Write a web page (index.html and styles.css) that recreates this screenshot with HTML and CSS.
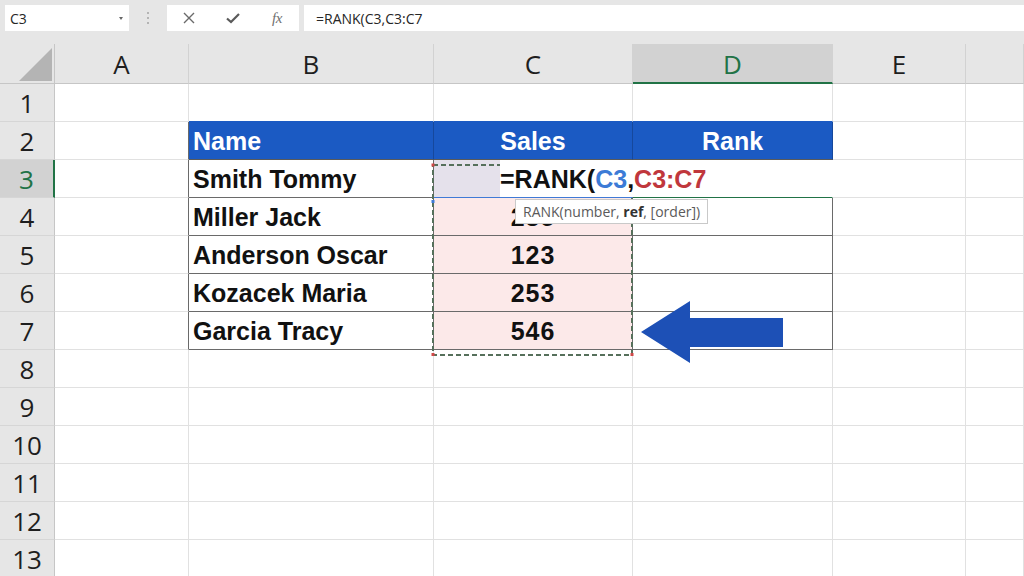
FILE: index.html
```html
<!DOCTYPE html>
<html>
<head>
<meta charset="utf-8">
<link rel="stylesheet" href="styles.css">
</head>
<body>
<div class="app">
  <div class="toolbar">
    <div class="namebox"><span>C3</span><span class="caret"></span></div>
    <div class="sep"><i></i><i></i><i></i></div>
    <div class="btns">
      <span class="btn"><svg width="14" height="14" viewBox="0 0 14 14"><path d="M2 2L12 12M12 2L2 12" stroke="#6a6a6a" stroke-width="1.4" fill="none"/></svg></span>
      <span class="btn"><svg width="16" height="14" viewBox="0 0 16 14"><path d="M2 7.5L6 11L14 3" stroke="#5a5a5a" stroke-width="2.2" fill="none"/></svg></span>
      <span class="btn fx">fx</span>
    </div>
    <div class="formula">=RANK(C3,C3:C7</div>
  </div>

  <div class="sheet">
    <div class="corner"><span class="tri"></span></div>
    <div class="ch">A</div><div class="ch">B</div><div class="ch">C</div><div class="ch sel">D</div><div class="ch">E</div><div class="ch"></div>

    <div class="rh">1</div><div class="c"></div><div class="c top"></div><div class="c top"></div><div class="c top"></div><div class="c"></div><div class="c"></div>

    <div class="rh">2</div><div class="c tl"></div><div class="c th left">Name</div><div class="c th">Sales</div><div class="c th">Rank</div><div class="c"></div><div class="c"></div>

    <div class="rh sel">3</div><div class="c tl"></div><div class="c td name">Smith Tommy</div><div class="c td ref3"></div><div class="c td active"></div><div class="c"></div><div class="c"></div>

    <div class="rh">4</div><div class="c tl"></div><div class="c td name">Miller Jack</div><div class="c td rng num">235</div><div class="c td"></div><div class="c"></div><div class="c"></div>

    <div class="rh">5</div><div class="c tl"></div><div class="c td name">Anderson Oscar</div><div class="c td rng num">123</div><div class="c td"></div><div class="c"></div><div class="c"></div>

    <div class="rh">6</div><div class="c tl"></div><div class="c td name">Kozacek Maria</div><div class="c td rng num">253</div><div class="c td"></div><div class="c"></div><div class="c"></div>

    <div class="rh">7</div><div class="c tl"></div><div class="c td name">Garcia Tracy</div><div class="c td rng num">546</div><div class="c td"></div><div class="c"></div><div class="c"></div>

    <div class="rh">8</div><div class="c"></div><div class="c"></div><div class="c"></div><div class="c"></div><div class="c"></div><div class="c"></div>
    <div class="rh">9</div><div class="c"></div><div class="c"></div><div class="c"></div><div class="c"></div><div class="c"></div><div class="c"></div>
    <div class="rh">10</div><div class="c"></div><div class="c"></div><div class="c"></div><div class="c"></div><div class="c"></div><div class="c"></div>
    <div class="rh">11</div><div class="c"></div><div class="c"></div><div class="c"></div><div class="c"></div><div class="c"></div><div class="c"></div>
    <div class="rh">12</div><div class="c"></div><div class="c"></div><div class="c"></div><div class="c"></div><div class="c"></div><div class="c"></div>
    <div class="rh">13</div><div class="c"></div><div class="c"></div><div class="c"></div><div class="c"></div><div class="c"></div><div class="c"></div>

    <svg class="ants" width="204" height="195" viewBox="0 0 204 195">
      <rect x="2" y="2" width="199" height="190" fill="none" stroke="#56705b" stroke-width="2" stroke-dasharray="5 3"/>
      <rect x="0.5" y="0.5" width="3" height="3" fill="#d04848"/>
      <rect x="199.5" y="0.5" width="3" height="3" fill="#d04848"/>
      <rect x="0.5" y="190" width="3" height="3" fill="#d04848"/>
      <rect x="199.5" y="190" width="3" height="3" fill="#d04848"/>
      <rect x="0.5" y="37" width="3" height="3" fill="#3f7ad6"/>
    </svg>

    <div class="editor"><span>=RANK(</span><span class="rb">C3</span><span>,</span><span class="rr">C3:C7</span></div>

    <div class="tip"><span>RANK(number, <b>ref</b>, [order])</span></div>

    <svg class="arrow" width="144" height="62" viewBox="0 0 144 62">
      <polygon points="0,31 49,0 49,17 142,17 142,46 49,46 49,62" fill="#1d50b6"/>
    </svg>
  </div>
</div>
</body>
</html>
```

FILE: styles.css
```css
html, body {
  margin: 0;
  padding: 0;
}
body {
  width: 1024px;
  height: 576px;
  overflow: hidden;
  background: #ffffff;
  font-family: "Open Sans", "Noto Sans", sans-serif;
}
.app {
  width: 1024px;
  height: 576px;
  display: flex;
  flex-direction: column;
}

/* formula bar */
.toolbar {
  height: 44px;
  flex: none;
  box-sizing: border-box;
  padding: 5px 0 0 5px;
  background: #e6e6e6;
  display: flex;
  align-items: flex-start;
}
.namebox {
  width: 124px;
  height: 26px;
  box-sizing: border-box;
  background: #fff;
  padding: 0 6px 0 5px;
  display: flex;
  align-items: center;
  justify-content: space-between;
  font-size: 14px;
  color: #262626;
}
.caret {
  width: 0;
  height: 0;
  border-left: 2.5px solid transparent;
  border-right: 2.5px solid transparent;
  border-top: 3px solid #666;
}
.sep {
  width: 38px;
  height: 26px;
  display: flex;
  flex-direction: column;
  align-items: center;
  justify-content: center;
  gap: 3px;
}
.sep i {
  width: 2px;
  height: 2px;
  background: #b4b4b4;
  display: block;
}
.btns {
  width: 132px;
  height: 26px;
  background: #fff;
  display: grid;
  grid-template-columns: 44px 44px 44px;
}
.btn {
  display: flex;
  align-items: center;
  justify-content: center;
}
.fx {
  font-family: "Liberation Serif", serif;
  font-style: italic;
  font-size: 15px;
  color: #707070;
  letter-spacing: -0.5px;
}
.formula {
  flex: 1;
  margin-left: 5px;
  height: 26px;
  background: #fff;
  box-sizing: border-box;
  padding-left: 12px;
  display: flex;
  align-items: center;
  font-size: 14px;
  color: #262626;
}

/* grid */
.sheet {
  position: relative;
  flex: 1;
  display: grid;
  grid-template-columns: 55px 134px 245px 199px 200px 133px 1fr;
  grid-template-rows: 40px;
  grid-auto-rows: 38px;
  overflow: hidden;
}
.corner {
  background: #e6e6e6;
  border-right: 1px solid #c6c6c6;
  border-bottom: 1px solid #c6c6c6;
  position: relative;
}
.tri {
  position: absolute;
  right: 2px;
  bottom: 2px;
  width: 0;
  height: 0;
  border-left: 33px solid transparent;
  border-bottom: 33px solid #b4b4b4;
}
.ch {
  background: #e6e6e6;
  border-right: 1px solid #d2d2d2;
  border-bottom: 1px solid #c6c6c6;
  display: flex;
  align-items: center;
  justify-content: center;
  font-size: 26px;
  line-height: 1;
  color: #1e1e1e;
  box-sizing: border-box;
}
.ch.sel {
  background: #d2d2d2;
  color: #217346;
  border-bottom: 2px solid #217346;
  padding-top: 1px;
}
.rh {
  background: #e6e6e6;
  border-right: 1px solid #c6c6c6;
  border-bottom: 1px solid #d6d6d6;
  display: flex;
  align-items: center;
  justify-content: center;
  font-size: 26px;
  line-height: 1;
  color: #1e1e1e;
  box-sizing: border-box;
}
.rh.sel {
  background: #d2d2d2;
  color: #217346;
  border-right: 2px solid #217346;
}
.c {
  border-right: 1px solid #e1e1e1;
  border-bottom: 1px solid #e1e1e1;
  box-sizing: border-box;
  display: flex;
  align-items: center;
  font-family: "Liberation Sans", Arial, sans-serif;
  font-weight: bold;
  font-size: 25px;
  color: #111;
  white-space: nowrap;
  padding-top: 2px;
}
.c.top {
  border-bottom-color: #1b5ac3;
}
.c.tl {
  border-right-color: #6a6a6a;
}
.c.th {
  background: #1b5ac3;
  color: #fff;
  justify-content: center;
  border-right-color: #16489c;
  border-bottom-color: #5a5a5a;
}
.c.th.left {
  justify-content: flex-start;
  padding-left: 4px;
}
.c.td {
  border-right-color: #6a6a6a;
  border-bottom-color: #6a6a6a;
}
.c.name {
  padding-left: 4px;
}
.c.num {
  justify-content: center;
  letter-spacing: 1px;
}
.c.rng {
  background: #fce9e9;
}
.c.ref3 {
  background: #e5e1eb;
  border-bottom: 1px solid #3f7ad6;
}
.c.active {
  border-bottom: 1px solid #217346;
  border-right-color: #ffffff;
}

/* overlays */
.ants {
  position: absolute;
  left: 431px;
  top: 119px;
  display: block;
}
.editor {
  position: absolute;
  left: 500px;
  top: 116px;
  width: 336px;
  height: 37px;
  background: #fff;
  box-sizing: border-box;
  display: flex;
  align-items: center;
  padding-top: 2px;
  font-family: "Liberation Sans", Arial, sans-serif;
  font-weight: bold;
  font-size: 25px;
  color: #111;
  white-space: nowrap;
}
.rb {
  color: #3c7bd6;
}
.rr {
  color: #c0373c;
}
.tip {
  position: absolute;
  left: 515px;
  top: 155px;
  height: 25px;
  box-sizing: border-box;
  padding: 0 7px;
  background: #fff;
  border: 1px solid #c9c9c9;
  display: flex;
  align-items: center;
  font-size: 14px;
  color: #5a5a5a;
  white-space: nowrap;
}
.tip b {
  color: #333;
  font-weight: 700;
}
.arrow {
  position: absolute;
  left: 641px;
  top: 257px;
  display: block;
}
```
